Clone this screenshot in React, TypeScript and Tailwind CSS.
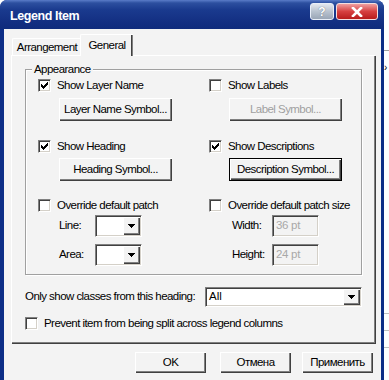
import React from 'react';

const font = { fontFamily: '"Liberation Sans", Arial, sans-serif' };

const Check: React.FC<{ checked?: boolean }> = ({ checked }) => (
    <div className="w-[13px] h-[13px] shrink-0 bg-white border border-t-[#808080] border-l-[#808080] border-b-white border-r-white shadow-[inset_1px_1px_0_#404040,inset_-1px_-1px_0_#d4d0c8] flex items-center justify-center">
        {checked && (
            <svg width="7" height="7" viewBox="0 0 7 7" shapeRendering="crispEdges">
                <path d="M0 2h1v3H0zM1 3h1v3H1zM2 4h1v3H2zM3 3h1v3H3zM4 2h1v3H4zM5 1h1v3H5zM6 0h1v3H6z" fill="#000" />
            </svg>
        )}
    </div>
);

const CheckRow: React.FC<{ checked?: boolean; label: string }> = ({ checked, label }) => (
    <div className="flex items-center h-[13px] gap-[6px]">
        <Check checked={checked} />
        <span className="text-[11.5px] text-black tracking-[-0.55px] whitespace-nowrap">{label}</span>
    </div>
);

const Btn: React.FC<{ label: string; disabled?: boolean; isDefault?: boolean; className?: string }> = ({ label, disabled, isDefault, className }) => (
    <div
        className={
            'flex items-center justify-center bg-[#f3f3f3] text-[11.5px] tracking-[-0.55px] whitespace-nowrap ' +
            (isDefault
                ? 'border border-black shadow-[inset_1px_1px_0_#fff,inset_-1px_-1px_0_#404040,inset_-2px_-2px_0_#808080] '
                : 'shadow-[inset_1px_1px_0_#fff,inset_-1px_-1px_0_#404040,inset_-2px_-2px_0_#808080] ') +
            (disabled ? 'text-[#a0a0a0] ' : 'text-black ') +
            (className ?? '')
        }
    >
        {label}
    </div>
);

const Arrow: React.FC<{ className?: string }> = ({ className }) => (
    <div className={'flex items-center justify-center bg-[#f3f3f3] shadow-[inset_1px_1px_0_#fff,inset_-1px_-1px_0_#404040,inset_-2px_-2px_0_#808080] ' + (className ?? '')}>
        <svg width="7" height="4" viewBox="0 0 7 4" shapeRendering="crispEdges">
            <path d="M0 0h7v1H0zM1 1h5v1H1zM2 2h3v1H2zM3 3h1v1H3z" fill="#000" />
        </svg>
    </div>
);

const Combo: React.FC<{ value?: string; className?: string }> = ({ value, className }) => (
    <div className={'flex bg-white border border-t-[#808080] border-l-[#808080] border-b-white border-r-white shadow-[inset_1px_1px_0_#404040,inset_-1px_-1px_0_#d4d0c8] p-[1px] ' + (className ?? '')}>
        <div className="flex-1 flex items-center pl-[2px] text-[11.5px] text-black">{value}</div>
        <Arrow className="w-[17px]" />
    </div>
);

const TextBox: React.FC<{ value: string }> = ({ value }) => (
    <div className="w-[47px] h-[22px] bg-[#f3f3f3] border border-t-[#808080] border-l-[#808080] border-b-white border-r-white shadow-[inset_1px_1px_0_#404040,inset_-1px_-1px_0_#d4d0c8] flex items-center pl-[3px] text-[11.5px] tracking-[-0.3px] text-[#a8a8a8]">
        {value}
    </div>
);

export default function App() {
    return (
        <div className="w-[389px] h-[380px] bg-white flex overflow-hidden" style={font}>
            {/* Window */}
            <div className="w-[384px] h-[380px] flex flex-col bg-[#0c2d86] rounded-tl-[7px] rounded-tr-[8px] shrink-0">
                {/* Title bar */}
                <div className="h-[29px] flex items-start pl-[10px] pr-[6px] rounded-tl-[7px] rounded-tr-[8px] bg-[linear-gradient(#5a7cc8_0px,#2c4f9f_3px,#1a3a8e_10px,#132f82_22px,#0f2b7c_29px)]">
                    <span className="mt-[7px] text-[12.5px] font-bold text-white tracking-[-0.4px]">Legend Item</span>
                    <div className="ml-auto mt-[3px] flex gap-[2px]">
                        <div className="w-[24px] h-[17px] rounded-[3px] border border-[#e8eef8] bg-[linear-gradient(#e4e8ee,#b8c2cf_50%,#9aa6b6)] flex items-center justify-center text-[12px] font-bold text-white [text-shadow:0_0_1px_#4a5568]">?</div>
                        <div className="w-[42px] h-[17px] rounded-[3px] border border-[#f4dede] bg-[linear-gradient(#f0a0a0,#d64040_50%,#b81c1c)] flex items-center justify-center">
                            <svg width="12" height="10" viewBox="0 0 12 10">
                                <path d="M2 1 L10 9 M10 1 L2 9" stroke="#fff" strokeWidth="2.6" strokeLinecap="square" />
                            </svg>
                        </div>
                    </div>
                </div>
                {/* Client */}
                <div className="flex-1 ml-[4px] mr-[3px] bg-[#f3f3f3] pl-[7px] pr-[6px] pt-[6px] flex flex-col">
                    {/* Tabs */}
                    <div className="flex items-end h-[21px] relative z-10 -mb-[1px]">
                        <div className="ml-[1px] h-[18px] w-[69px] border-t border-l border-white shadow-[inset_-1px_0_0_#808080] flex items-center justify-center text-[11.5px] tracking-[-0.55px] text-black rounded-tl-[2px]">Arrangement</div>
                        <div className="h-[22px] w-[53px] bg-[#f3f3f3] border-t border-l border-white shadow-[inset_-1px_0_0_#808080,inset_-2px_0_0_#404040] flex items-start pt-[2px] justify-center text-[11.5px] tracking-[-0.55px] text-black rounded-tl-[2px] -ml-[1px]">General</div>
                    </div>
                    {/* Panel */}
                    <div className="w-[364px] h-[288px] border-t border-l border-white shadow-[inset_-1px_-1px_0_#808080,1px_1px_0_#404040] pl-[13px] pr-[13px] pt-[13px] flex flex-col">
                        {/* Group box */}
                        <div className="relative w-[337px] h-[206px] border border-[#a0a0a0] shadow-[inset_1px_1px_0_#fff,1px_1px_0_#fff] pl-[12px] pt-[9px]">
                            <span className="absolute -top-[8px] left-[6px] px-[2px] bg-[#f3f3f3] text-[11.5px] tracking-[-0.55px] text-black leading-[14px]">Appearance</span>
                            <div className="flex">
                                {/* Left column */}
                                <div className="w-[171px] flex flex-col">
                                    <CheckRow checked label="Show Layer Name" />
                                    <Btn label="Layer Name Symbol..." className="ml-[21px] mt-[6px] w-[113px] h-[23px]" />
                                    <div className="mt-[19px]"><CheckRow checked label="Show Heading" /></div>
                                    <Btn label="Heading Symbol..." className="ml-[21px] mt-[5px] w-[113px] h-[23px]" />
                                    <div className="mt-[18px]"><CheckRow label="Override default patch" /></div>
                                    <div className="ml-[21px] mt-[3px] flex items-center h-[22px]">
                                        <span className="w-[36px] text-[11.5px] tracking-[-0.55px] text-black">Line:</span>
                                        <Combo className="w-[47px] h-[22px]" />
                                    </div>
                                    <div className="ml-[21px] mt-[7px] flex items-center h-[22px]">
                                        <span className="w-[36px] text-[11.5px] tracking-[-0.55px] text-black">Area:</span>
                                        <Combo className="w-[47px] h-[22px]" />
                                    </div>
                                </div>
                                {/* Right column */}
                                <div className="flex flex-col">
                                    <CheckRow label="Show Labels" />
                                    <Btn label="Label Symbol..." disabled className="ml-[20px] mt-[6px] w-[113px] h-[23px]" />
                                    <div className="mt-[19px]"><CheckRow checked label="Show Descriptions" /></div>
                                    <Btn label="Description Symbol..." isDefault className="ml-[20px] mt-[5px] w-[113px] h-[23px]" />
                                    <div className="mt-[18px]"><CheckRow label="Override default patch size" /></div>
                                    <div className="ml-[23px] mt-[3px] flex items-center h-[22px]">
                                        <span className="w-[40px] text-[11.5px] tracking-[-0.55px] text-black">Width:</span>
                                        <TextBox value="36 pt" />
                                    </div>
                                    <div className="ml-[23px] mt-[7px] flex items-center h-[22px]">
                                        <span className="w-[40px] text-[11.5px] tracking-[-0.55px] text-black">Height:</span>
                                        <TextBox value="24 pt" />
                                    </div>
                                </div>
                            </div>
                        </div>
                        {/* Heading filter */}
                        <div className="mt-[12px] flex items-center h-[20px]">
                            <span className="w-[180px] text-[11.5px] tracking-[-0.55px] text-black whitespace-nowrap">Only show classes from this heading:</span>
                            <Combo value="All" className="w-[157px] h-[20px]" />
                        </div>
                        <div className="mt-[10px]">
                            <div className="flex items-center h-[13px] gap-[6px]">
                                <Check />
                                <span className="text-[11.5px] text-black tracking-[-0.55px]">Prevent item from being split across legend columns</span>
                            </div>
                        </div>
                    </div>
                    {/* Dialog buttons */}
                    <div className="flex justify-end gap-[14px] mt-[9px] pr-[2px]">
                        <Btn label="OK" className="w-[71px] h-[21px]" />
                        <Btn label="Отмена" className="w-[71px] h-[21px]" />
                        <Btn label="Применить" className="w-[71px] h-[21px] -ml-[3px]" />
                    </div>
                </div>
            </div>
            {/* Background window edge */}
            <div className="flex-1 flex flex-col bg-white">
                <div className="h-[50px]" />
                <div className="h-[1px] bg-[#a0a0a0]" />
                <div className="h-[12px]" />
                <div className="text-[10px] leading-[10px] text-black">›</div>
                <div className="h-[240px]" />
                <div className="h-[1px] bg-[#c0c0c0]" />
                <div className="h-[16px]" />
                <div className="h-[1px] bg-[#c0c0c0]" />
                <div className="h-[16px]" />
                <div className="h-[1px] bg-[#c0c0c0]" />
            </div>
        </div>
    );
}
